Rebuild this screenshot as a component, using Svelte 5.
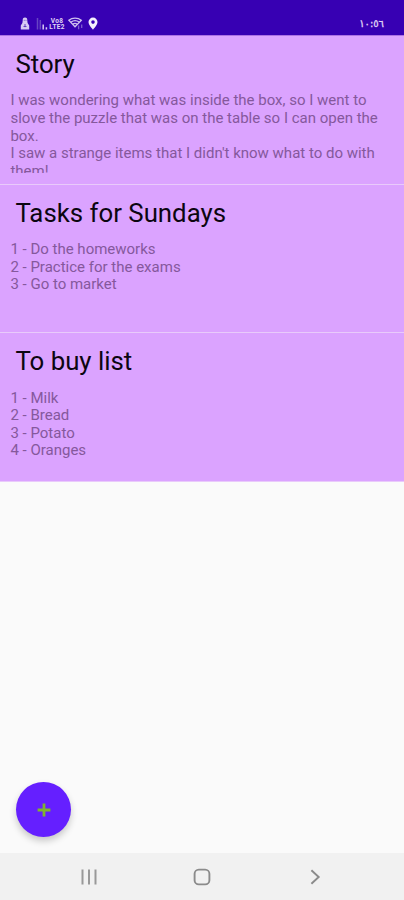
<script>
  const notes = [
    {
      title: 'Story',
      lines: [
        'I was wondering what was inside the box, so I went to slove the puzzle that was on the table so I can open the box.',
        "I saw a strange items that I didn't know what to do with them!"
      ]
    },
    {
      title: 'Tasks for Sundays',
      lines: ['1 - Do the homeworks', '2 - Practice for the exams', '3 - Go to market']
    },
    {
      title: 'To buy list',
      lines: ['1 - Milk', '2 - Bread', '3 - Potato', '4 - Oranges']
    }
  ];
</script>

<div class="screen">
  <header class="status">
    <div class="indicators">
      <svg class="alert" width="10" height="13" viewBox="0 0 10 13">
        <path d="M5 .5C3.2.5 2.6 1.8 2.7 3.4L2.4 6 .8 8.5v3.9h8.4V8.5L7.6 6l-.3-2.6C7.4 1.8 6.8.5 5 .5Z" fill="#d8cbf3" />
        <path d="M3.8 3.3h.8M5.6 3.3h.8M3.5 9.5h3M5 7v3.2" stroke="#5b35bb" stroke-width=".9" />
      </svg>
      <svg class="signal" width="12" height="13" viewBox="0 0 12 13">
        <path d="M1.5 1v11.5M4.3 3v9.5" stroke="#6744c4" stroke-width="1.5" />
        <path d="M7.2 7.5v5M10.4 10.3v2.2" stroke="#d8cbf3" stroke-width="1.5" />
      </svg>
      <div class="volte">Vo8<br />LTE2</div>
      <svg class="wifi" width="16" height="13" viewBox="0 0 16 13">
        <g fill="none" stroke="#cfc0ef" stroke-width="1.3">
          <path d="M.8 3.2C4.3.4 9.8.4 13.3 3.2L7 9.7Z" />
          <path d="M3.1 5.1c2.3-1.7 5.7-1.7 8 0M5 7.1c1.2-.8 2.8-.8 4 0" />
        </g>
        <path d="M10.6 8.5v3.8M13.7 7.5v3.5" stroke="#7f5fcf" stroke-width="1.3" />
      </svg>
      <svg class="pin" width="10" height="13" viewBox="0 0 10 13">
        <path d="M5 .6A4.5 4.5 0 0 0 .5 5.1C.5 8.2 5 12.7 5 12.7S9.5 8.2 9.5 5.1A4.5 4.5 0 0 0 5 .6Zm0 2.7a1.8 1.8 0 1 1 0 3.6 1.8 1.8 0 0 1 0-3.6Z" fill="#f4effd" fill-rule="evenodd" />
      </svg>
    </div>
    <time>١٠:٥٦</time>
  </header>

  <main>
    {#each notes as note}
      <article>
        <h2>{note.title}</h2>
        <div class="body">
          {#each note.lines as line}
            <p>{line}</p>
          {/each}
        </div>
      </article>
    {/each}
    <button class="fab" aria-label="Add note">
      <svg width="14" height="14" viewBox="0 0 14 14">
        <path d="M7 .6v12.8M.6 7h12.8" stroke="#7fb52c" stroke-width="2.8" />
      </svg>
    </button>
  </main>

  <nav>
    <svg width="16" height="16" viewBox="0 0 16 16">
      <path d="M1.5 .5v15M8 .5v15M14.5 .5v15" stroke="#999" stroke-width="2" />
    </svg>
    <svg width="18" height="18" viewBox="0 0 18 18">
      <rect x="1.6" y="1.6" width="14.8" height="14.8" rx="4.2" fill="none" stroke="#8b8b8b" stroke-width="1.9" />
    </svg>
    <svg width="16" height="16" viewBox="0 0 16 16">
      <path d="M4.4 1.2 11.7 8l-7.3 6.8" fill="none" stroke="#8b8b8b" stroke-width="1.9" />
    </svg>
  </nav>
</div>

<style>
  .screen {
    display: flex;
    flex-direction: column;
    width: 404px;
    height: 900px;
    overflow: hidden;
    background: #fafafa;
    font-family: Roboto, 'Liberation Sans', sans-serif;
  }
  .status {
    box-sizing: border-box;
    display: flex;
    flex: none;
    justify-content: space-between;
    align-items: flex-start;
    height: 36px;
    padding: 17px 20px 0;
    background: #3700b3;
    border-bottom: 1px solid #ac72e3;
    color: #e0d5f6;
  }
  .indicators {
    display: flex;
    align-items: flex-start;
  }
  .indicators svg {
    display: block;
  }
  .signal {
    margin-left: 6px;
  }
  .volte {
    width: 18px;
    padding-top: 1px;
    font-size: 6.5px;
    line-height: 6px;
    font-weight: 700;
    letter-spacing: 0.3px;
    text-align: center;
  }
  .wifi {
    margin-left: 2px;
  }
  .pin {
    margin-left: 4px;
  }
  time {
    font-family: 'DejaVu Sans', sans-serif;
    font-size: 10px;
    line-height: 13px;
    -webkit-text-stroke: 0.3px #e0d5f6;
  }
  main {
    position: relative;
    flex: 1;
  }
  article {
    box-sizing: border-box;
    height: 148.6px;
    padding: 11px 15px 0 10.4px;
    background: #dba3ff;
    border-bottom: 1px solid #e9cafb;
    overflow: hidden;
  }
  h2 {
    margin: 0 0 0 5px;
    font-size: 25.8px;
    line-height: 34px;
    font-weight: 400;
    color: #0c0610;
  }
  .body {
    height: 81px;
    margin-top: 11.4px;
    overflow: hidden;
    font-size: 15px;
    line-height: 17.6px;
    color: #85589c;
  }
  p {
    margin: 0;
  }
  .fab {
    position: absolute;
    left: 16px;
    bottom: 16px;
    display: flex;
    align-items: center;
    justify-content: center;
    width: 55px;
    height: 55px;
    padding: 0;
    border: 0;
    border-radius: 50%;
    background: #651fff;
    box-shadow: 0 4px 7px rgba(0, 0, 0, 0.2);
  }
  nav {
    display: flex;
    flex: none;
    align-items: center;
    justify-content: space-between;
    height: 47px;
    padding: 0 81px;
    background: #f1f1f1;
  }
</style>
